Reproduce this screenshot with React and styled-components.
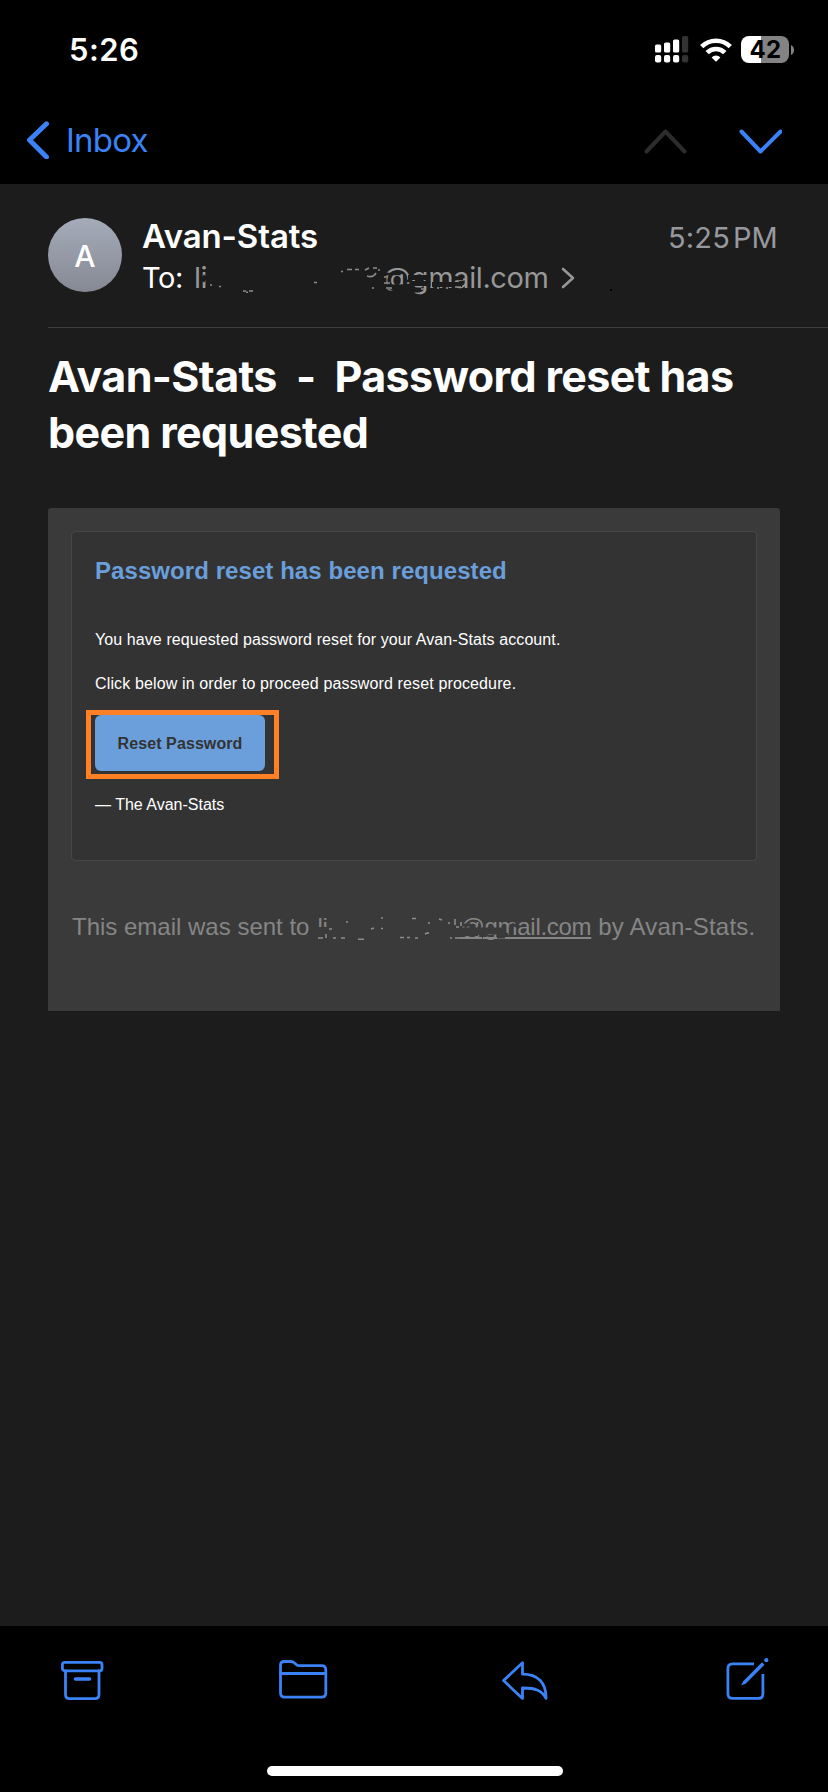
import React from "react";
import styled, { createGlobalStyle } from "styled-components";

const blue = "#3b82f7";
const page = "#1c1c1c";
const panel = "#3a3a3a";

const GlobalStyle = createGlobalStyle`
  * { box-sizing: border-box; }
  body { margin: 0; background: #000; }
  h1, h2, p { margin: 0; }
  svg { display: block; flex: none; }
  button { border: 0; padding: 0; background: none; font: inherit; color: inherit; }
`;

const Screen = styled.div`
  width: 828px;
  height: 1792px;
  display: flex;
  flex-direction: column;
  background: #000;
  color: #fff;
  font-family: Inter, sans-serif;
  white-space: nowrap;
  overflow: hidden;
`;

const StatusBar = styled.header`
  height: 99px;
  padding: 0 34px 0 69px;
  display: flex;
  align-items: center;
  justify-content: space-between;
`;

const Clock = styled.time`
  font-size: 31px;
  font-weight: 600;
  letter-spacing: 0.4px;
`;

const StatusIcons = styled.div`
  display: flex;
  align-items: center;
  gap: 11px;
`;

const Battery = styled.div`
  display: flex;
  align-items: center;
  gap: 2px;
  margin-left: -2px;
`;

const BatteryLevel = styled.div`
  width: 48px;
  height: 27px;
  padding-left: 1px;
  border-radius: 8px;
  background: linear-gradient(90deg, #fff ${(p) => p.$level}%, #838383 ${(p) => p.$level}%);
  color: #000;
  font-size: 24px;
  font-weight: 700;
  line-height: 27px;
  letter-spacing: 0.4px;
  text-align: center;
`;

const NavBar = styled.nav`
  height: 85px;
  padding: 0 46px 3px 26px;
  display: flex;
  align-items: center;
  justify-content: space-between;
`;

const BackButton = styled.button`
  display: flex;
  align-items: center;
  gap: 15px;
  color: ${blue};
  font-size: 33px;
  letter-spacing: -0.8px;
`;

const NavArrows = styled.div`
  display: flex;
  gap: 52px;
  margin-top: 1px;
`;

const Message = styled.main`
  flex: 1;
  background: ${page};
`;

const Envelope = styled.section`
  height: 144px;
  margin-left: 48px;
  padding: 31px 50px 0 0;
  display: flex;
  border-bottom: 1px solid #3e3e40;
`;

const Avatar = styled.div`
  width: 74px;
  height: 74px;
  margin: 3px 20px 0 0;
  border-radius: 50%;
  background: linear-gradient(#a5abb9, #858994);
  font-size: 30px;
  font-weight: 500;
  line-height: 77px;
  text-align: center;
`;

const People = styled.div`
  flex: 1;
`;

const Sender = styled.div`
  font-size: 33px;
  font-weight: 600;
  line-height: 42px;
  letter-spacing: -0.1px;
`;

const Recipient = styled.div`
  position: relative;
  display: flex;
  align-items: center;
  font-size: 29px;
  line-height: 41px;
  letter-spacing: -0.4px;
`;

const Address = styled.span`
  display: flex;
  color: #979797;
  margin: 0 12px 0 11px;
`;

const AddressGap = styled.span`
  width: ${(p) => p.$width}px;
`;

const SentTime = styled.time`
  color: #98989f;
  font-size: 29px;
  line-height: 45px;
  letter-spacing: 0.2px;
  word-spacing: -5.5px;
`;

const Scribble = styled.svg`
  position: absolute;
  top: 0;
  left: 0;
  overflow: visible;
  pointer-events: none;
`;

const Subject = styled.h1`
  padding: 20px 48px 48px;
  font-size: 43px;
  font-weight: 700;
  line-height: 56px;
  letter-spacing: -0.62px;
  white-space: pre-wrap;
`;

const Mail = styled.article`
  height: 503px;
  margin: 0 48px;
  padding: 23px;
  border-radius: 3px 3px 0 0;
  background: ${panel};
  font-family: "Liberation Sans", sans-serif;
`;

const Card = styled.section`
  height: 330px;
  padding: 24px 23px 0;
  border: 1px solid #464646;
  border-radius: 4px;
  background: #333;
`;

const CardTitle = styled.h2`
  margin-bottom: 42px;
  color: #6a9fdb;
  font-size: 24px;
  font-weight: 700;
  line-height: 30px;
  letter-spacing: 0.07px;
`;

const Line = styled.p`
  margin-bottom: 20px;
  font-size: 16px;
  line-height: 24px;
  letter-spacing: ${(p) => p.$tracking}px;
`;

const Highlight = styled.div`
  width: 193px;
  height: 69px;
  margin: -6px 0 14px -9px;
  padding-left: 4px;
  border: 5px solid #ff8025;
`;

const ResetButton = styled.button`
  width: 170px;
  height: 56px;
  padding-top: 2px;
  border-radius: 6px;
  background: #6a9fdb;
  color: #333;
  font-size: 16px;
  font-weight: 700;
  letter-spacing: 0.1px;
  text-align: center;
`;

const MailFooter = styled.p`
  position: relative;
  display: flex;
  margin-top: 49px;
  padding-left: 1px;
  color: #858585;
  font-size: 24px;
  line-height: 34px;
`;

const MailLink = styled.span`
  display: flex;
  margin: 0 7px 0 8px;
  letter-spacing: -0.3px;
`;

const Underlined = styled.span`
  text-decoration: underline;
  text-decoration-thickness: 2px;
  text-underline-offset: 2px;
  text-decoration-skip-ink: none;
`;

const Closing = styled.span`
  letter-spacing: 0.2px;
`;

const TabBar = styled.footer`
  height: 166px;
  display: flex;
  flex-direction: column;
  justify-content: space-between;
  align-items: center;
  padding: 30px 59px 16px 60px;
`;

const Actions = styled.div`
  width: 100%;
  display: flex;
  justify-content: space-between;
`;

const HomeIndicator = styled.div`
  width: 296px;
  height: 10px;
  border-radius: 5px;
  background: #fff;
`;

const lineIcon = { fill: "none", stroke: blue, strokeWidth: 2.8, strokeLinecap: "round", strokeLinejoin: "round" };

const Signal = () => (
  <svg width="34" height="27" viewBox="0 0 34 27" fill="#fff">
    <rect x="0" y="8.5" width="6.2" height="8" rx="1.6" />
    <rect x="9" y="6.5" width="6.2" height="10" rx="1.6" />
    <rect x="18" y="3.5" width="6.2" height="13" rx="1.6" />
    <rect x="27" y="0" width="6.2" height="16.5" rx="1.6" fill="#333" />
    <rect x="0" y="19" width="6.2" height="7.5" rx="2" />
    <rect x="9" y="19" width="6.2" height="7.5" rx="2" />
    <rect x="18" y="19" width="6.2" height="7.5" rx="2" />
    <rect x="27" y="19" width="6.2" height="7.5" rx="2" fill="#333" />
  </svg>
);

const Wifi = () => (
  <svg width="32" height="24" viewBox="0 0 32 24" fill="none" stroke="#fff" strokeWidth="4.6">
    <path d="M1.7 8.7a20.3 20.3 0 0 1 28.6 0" />
    <path d="M7.2 14.6a12.4 12.4 0 0 1 17.6 0" />
    <path d="M11.6 19.4a6.2 6.2 0 0 1 8.8 0L16 23.8z" fill="#fff" stroke="none" />
  </svg>
);

const Chevron = ({ d, w, h, color = blue, stroke }) => (
  <svg width={w} height={h} viewBox={`0 0 ${w} ${h}`} fill="none" stroke={color} strokeWidth={stroke} strokeLinecap="round" strokeLinejoin="round">
    <path d={d} />
  </svg>
);

const ArchiveIcon = () => (
  <svg width="44" height="46" viewBox="0 0 44 46" {...lineIcon}>
    <rect x="2.4" y="6.4" width="39.6" height="8.4" rx="2.4" />
    <path d="M5.5 15v23.5q0 4.1 4.1 4.1h25.3q4.1 0 4.1-4.1V15" />
    <path d="M15.5 23h14" strokeWidth="3.6" />
  </svg>
);

const FolderIcon = () => (
  <svg width="49" height="46" viewBox="0 0 49 46" {...lineIcon}>
    <path d="M1.5 37V9.5q0-4 4-4h6.3q2 0 3.4 1.2l2 1.8q1.3 1.2 3.1 1.2H42.6q4.2 0 4.2 4.2V37q0 4.2-4.2 4.2H5.7Q1.5 41.200 1.5 37z" />
    <path d="M1.5 17.5h45.3" />
  </svg>
);

const ReplyIcon = () => (
  <svg width="48" height="46" viewBox="0 0 48 46" {...lineIcon}>
    <path d="M20.500 6.800v11.400c15 0 23.800 8 23.500 24.200-3.800-8-10.500-10.500-23.500-10.400v10.400L1.500 24.600z" />
  </svg>
);

const ComposeIcon = () => (
  <svg width="44" height="46" viewBox="0 0 44 46" {...lineIcon}>
    <path d="M29 7.900H7.500q-4.600 0-4.600 4.600v25.300q0 4.600 4.600 4.600h25.800q4.600 0 4.600-4.600V18" strokeLinecap="butt" />
    <path d="M16 29.600l2.400-4.700L37 6.300l2.500 2.500-18.600 18.600z" fill={blue} stroke="none" />
    <circle cx="41.300" cy="4.200" r="2.100" fill={blue} stroke="none" />
  </svg>
);

export default function App() {
  return (
    <Screen>
      <GlobalStyle />
      <StatusBar>
        <Clock>5:26</Clock>
        <StatusIcons>
          <Signal />
          <Wifi />
          <Battery>
            <BatteryLevel $level={42}>42</BatteryLevel>
            <svg width="3" height="10" viewBox="0 0 3 10" fill="#838383"><path d="M0 0q3 1.500 3 5t-3 5z" /></svg>
          </Battery>
        </StatusIcons>
      </StatusBar>
      <NavBar>
        <BackButton>
          <Chevron w={25} h={38} d="M20.500 2.800L3.500 19l17 17" stroke={5} />
          Inbox
        </BackButton>
        <NavArrows>
          <Chevron w={43} h={26} d="M2.500 23.500L21.500 3.500l19 20" stroke={4} color="#2c2c2c" />
          <Chevron w={43} h={26} d="M2.500 3.500L21.500 23.500l20-20" stroke={4} />
        </NavArrows>
      </NavBar>

      <Message>
        <Envelope>
          <Avatar>A</Avatar>
          <People>
            <Sender>Avan-Stats</Sender>
            <Recipient>
              To:
              <Address>
                <span>li</span>
                <AddressGap $width={176} />
                <span>@gmail.com</span>
              </Address>
              <Chevron w={14} h={22} d="M2 2l10 9-10 9" stroke={2.6} color="#979797" />
              <Scribble width="480" height="41" viewBox="142 257 480 41" fill="none">
                <g stroke={page} strokeWidth="5">
                  <path d="M384 272v22M380 286q16 2 32 0v7h-28M408 277.500h20v6h-16M408 290h12M432 284.500h30M206 276l-4 5" />
                  <path d="M382 274h18M404 281h8M456 279h7" strokeWidth="2.500" />
                </g>
                <g stroke="#8c8c8c" strokeWidth="1.600">
                  <path d="M210 285h2M219 286.500h2M243 291h3M246 292.300h2M249 291h4M314 282.500h3M341 271.500h2M347 269.500h5M355 269.500h4M365 270l4-2M373 268h4M367 276q6 2 9-3M378 270h2M372 288h2M384 277h3M384 283h6M386 288h6M421 289h3M438 287v2M447 287v2M455 287h6" />
                </g>
                <rect x="610" y="289" width="2" height="2" fill="#000" />
              </Scribble>
            </Recipient>
          </People>
          <SentTime>5:25 PM</SentTime>
        </Envelope>

        <Subject>{"Avan-Stats  -  Password reset has\nbeen requested"}</Subject>

        <Mail>
          <Card>
            <CardTitle>Password reset has been requested</CardTitle>
            <Line $tracking={0.09}>You have requested password reset for your Avan-Stats account.</Line>
            <Line $tracking={0.135}>Click below in order to proceed password reset procedure.</Line>
            <Highlight>
              <ResetButton>Reset Password</ResetButton>
            </Highlight>
            <Line $tracking={0}>— The Avan-Stats</Line>
          </Card>
          <MailFooter>
            <span>This email was sent to</span>
            <MailLink>
              <span>li</span>
              <AddressGap $width={133} />
              <Underlined>@gmail.com</Underlined>
            </MailLink>
            <Closing>by Avan-Stats.</Closing>
            <Scribble width="686" height="34" viewBox="71 910 686 34" fill="none">
              <g stroke={panel} strokeWidth="4">
                <path d="M317 929h12M318 933h12M461 929.500h40v3h-42M458 934h20M498 933l10 2" />
                <path d="M461 925h10M482 937h1M497 937h8M512 924l6 3" strokeWidth="3" />
              </g>
              <g stroke="#8c8c8c" strokeWidth="1.600">
                <path d="M318 938h5M326 934v4M333 938h3M341 938h4M358 939.300h6M329 929h3M346 922h2M371 929l3-1M381 928.500h2M381 918h2M400 937.500h4M407 937.500h3M412 918.500h4M415 938h3M425 934l2-1M428 932v2M429 922v2M439 919l3 1M449 922v2M455 919v6M456 927h3M461 922v4M450 938h2M455 938h6" />
              </g>
            </Scribble>
          </MailFooter>
        </Mail>
      </Message>

      <TabBar>
        <Actions>
          <ArchiveIcon />
          <FolderIcon />
          <ReplyIcon />
          <ComposeIcon />
        </Actions>
        <HomeIndicator />
      </TabBar>
    </Screen>
  );
}
